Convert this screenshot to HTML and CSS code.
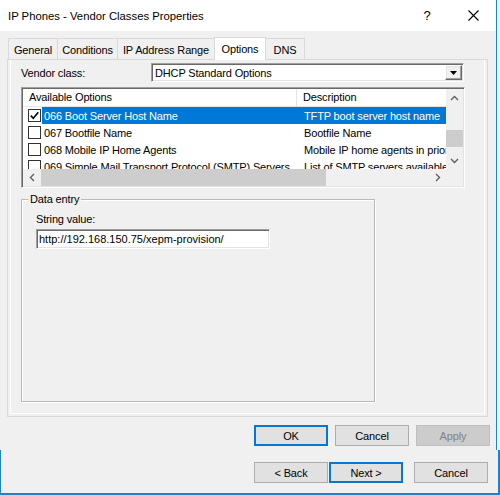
FILE: index.html
```html
<!DOCTYPE html>
<html>
<head>
<meta charset="utf-8">
<link rel="stylesheet" href="styles.css">
</head>
<body>
<div class="dialog">
  <div class="titlebar">
    <span class="title">IP Phones - Vendor Classes Properties</span>
    <span class="help">?</span>
    <span class="close"><svg width="11" height="11" viewBox="0 0 11 11"><path d="M0.5 0.5 L10.5 10.5 M10.5 0.5 L0.5 10.5" stroke="#000" stroke-width="1.1" fill="none"/></svg></span>
  </div>
  <div class="content">
    <div class="tabs">
      <div class="tab tab-general">General</div>
      <div class="tab tab-conditions">Conditions</div>
      <div class="tab tab-range">IP Address Range</div>
      <div class="tab tab-options active">Options</div>
      <div class="tab tab-dns">DNS</div>
    </div>
    <div class="panel">
      <div class="page">
        <div class="vendor-row">
          <span class="vendor-label">Vendor class:</span>
          <div class="combo">
            <span class="combo-text">DHCP Standard Options</span>
            <span class="combo-btn"><svg width="7" height="4" viewBox="0 0 7 4"><polygon points="0,0 7,0 3.5,4" fill="#000"/></svg></span>
          </div>
        </div>
        <div class="listview">
          <div class="lv-content">
            <div class="lv-header">
              <div class="col-h1">Available Options</div>
              <div class="col-h2">Description</div>
            </div>
            <div class="lv-row">
              <span class="check"><svg width="11" height="11" viewBox="0 0 11 11"><path d="M1.8 5.6 L4.3 8.2 L9.3 2.3" stroke="#000" stroke-width="1.6" fill="none"/></svg></span>
              <div class="item selected"><span class="name">066 Boot Server Host Name</span><span class="desc">TFTP boot server host name</span></div>
            </div>
            <div class="lv-row">
              <span class="check"></span>
              <div class="item"><span class="name">067 Bootfile Name</span><span class="desc">Bootfile Name</span></div>
            </div>
            <div class="lv-row">
              <span class="check"></span>
              <div class="item"><span class="name">068 Mobile IP Home Agents</span><span class="desc">Mobile IP home agents in priority order</span></div>
            </div>
            <div class="lv-row">
              <span class="check"></span>
              <div class="item"><span class="name">069 Simple Mail Transport Protocol (SMTP) Servers</span><span class="desc">List of SMTP servers available to the client</span></div>
            </div>
          </div>
          <div class="vscroll">
            <span class="sb-btn"><svg width="9" height="6" viewBox="0 0 9 6"><path d="M1 5 L4.5 1.5 L8 5" stroke="#606060" stroke-width="1.4" fill="none"/></svg></span>
            <div class="vtrack"><div class="vthumb"></div></div>
            <span class="sb-btn"><svg width="9" height="6" viewBox="0 0 9 6"><path d="M1 1 L4.5 4.5 L8 1" stroke="#606060" stroke-width="1.4" fill="none"/></svg></span>
          </div>
          <div class="hscroll">
            <span class="sb-btn"><svg width="6" height="9" viewBox="0 0 6 9"><path d="M5 1 L1.5 4.5 L5 8" stroke="#606060" stroke-width="1.4" fill="none"/></svg></span>
            <div class="htrack"><div class="hthumb"></div></div>
            <span class="sb-btn"><svg width="6" height="9" viewBox="0 0 6 9"><path d="M1 1 L4.5 4.5 L1 8" stroke="#606060" stroke-width="1.4" fill="none"/></svg></span>
          </div>
          <div class="corner"></div>
        </div>
        <div class="group">
          <span class="legend">Data entry</span>
          <span class="field-label">String value:</span>
          <div class="textbox">http://192.168.150.75/xepm-provision/</div>
        </div>
      </div>
    </div>
    <div class="btn-row">
      <div class="btn default">OK</div>
      <div class="btn">Cancel</div>
      <div class="btn disabled">Apply</div>
    </div>
  </div>
</div>
<div class="wizard">
  <div class="btn">&lt; Back</div>
  <div class="btn default next">Next &gt;</div>
  <div class="btn cancel2">Cancel</div>
</div>
</body>
</html>
```
FILE: styles.css
```css
* { box-sizing: border-box; }
html, body { margin: 0; padding: 0; }
body {
  width: 500px;
  height: 495px;
  overflow: hidden;
  background: #f0f0f0;
  font-family: "Liberation Sans", Arial, sans-serif;
  font-size: 11px;
  letter-spacing: -0.15px;
  color: #000;
}

.dialog {
  width: 497px;
  height: 450px;
  border-right: 1px solid #1883d7;
  display: flex;
  flex-direction: column;
}

.titlebar {
  height: 31px;
  flex: none;
  background: #fff;
  display: flex;
  align-items: center;
  padding-left: 8px;
}
.title { flex: 1; font-size: 11.3px; letter-spacing: 0; }
.help { width: 46px; text-align: center; font-size: 13px; }
.close { width: 46px; display: flex; justify-content: center; align-items: center; }

.content {
  flex: 1;
  padding: 6px 6px 0 7px;
  display: flex;
  flex-direction: column;
}

.tabs {
  display: flex;
  align-items: flex-end;
  height: 22px;
  margin-left: 1px;
}
.tab {
  height: 21px;
  border: 1px solid #d9d9d9;
  border-bottom: none;
  margin-left: -1px;
  padding-top: 2px;
  background: #f0f0f0;
  display: flex;
  align-items: center;
  justify-content: center;
  white-space: nowrap;
}
.tab:first-child { margin-left: 0; }
.tab.active {
  height: 23px;
  margin-bottom: -1px;
  padding-top: 0;
  background: #fff;
  position: relative;
  z-index: 1;
}
.tab-general { width: 50px; }
.tab-conditions { width: 61px; }
.tab-range { width: 98px; }
.tab-options { width: 52px; }
.tab-dns { width: 40px; }

.panel {
  width: 481px;
  height: 358px;
  border: 1px solid #d9d9d9;
  padding: 0 2px 2px 2px;
  display: flex;
}
.page {
  flex: 1;
  border: 1px solid #fff;
  border-top: none;
  padding: 3px 0 0 10px;
  display: flex;
  flex-direction: column;
  align-items: flex-start;
}

.vendor-row { display: flex; align-items: center; height: 19px; }
.vendor-label { width: 130px; }
.combo {
  width: 313px;
  height: 19px;
  background: #fff;
  border: 1px solid;
  border-color: #a0a0a0 #fff #fff #a0a0a0;
  box-shadow: inset 1px 1px #696969, inset -1px -1px #e3e3e3;
  padding: 1px;
  display: flex;
  align-items: center;
}
.combo-text { flex: 1; padding-left: 2px; }
.combo-btn {
  width: 17px;
  height: 15px;
  background: #f0f0f0;
  border: 1px solid;
  border-color: #fff #696969 #696969 #fff;
  box-shadow: inset -1px -1px #a0a0a0, inset 1px 1px #e3e3e3;
  display: flex;
  align-items: center;
  justify-content: center;
}

.listview {
  margin-top: 5px;
  width: 444px;
  height: 101px;
  border: 1px solid;
  border-color: #a0a0a0 #fff #fff #a0a0a0;
  box-shadow: inset 1px 1px #696969, inset -1px -1px #e3e3e3;
  padding: 1px;
  display: grid;
  grid-template-columns: 1fr 17px;
  grid-template-rows: 1fr 17px;
  background: #fff;
}
.lv-content { overflow: hidden; background: #fff; }
.lv-header {
  display: flex;
  height: 18px;
  border-bottom: 1px solid #e5e5e5;
}
.col-h1 {
  width: 274px;
  border-right: 1px solid #e5e5e5;
  padding-left: 6px;
  line-height: 17px;
}
.col-h2 { padding-left: 6px; line-height: 17px; }

.lv-row { display: flex; align-items: center; height: 17px; }
.check {
  width: 13px;
  height: 13px;
  margin-left: 5px;
  flex: none;
  border: 1px solid #333;
  background: #fff;
  display: flex;
}
.item {
  flex: 1;
  margin-left: 1px;
  height: 17px;
  display: flex;
  align-items: center;
  overflow: hidden;
}
.item.selected { background: #0078d7; color: #fff; }
.name { width: 255px; flex: none; padding-left: 2px; overflow: hidden; white-space: nowrap; }
.desc { flex: 1; padding-left: 7px; overflow: hidden; white-space: nowrap; }

.vscroll { background: #f0f0f0; display: flex; flex-direction: column; }
.hscroll { background: #f0f0f0; display: flex; }
.sb-btn {
  width: 17px;
  height: 17px;
  flex: none;
  display: flex;
  align-items: center;
  justify-content: center;
}
.vtrack { flex: 1; }
.vthumb { margin-top: 24px; height: 17px; background: #cdcdcd; }
.htrack { flex: 1; display: flex; align-items: stretch; }
.hthumb { margin-left: 1px; width: 285px; background: #cdcdcd; }
.corner { background: #f0f0f0; }

.group {
  margin-top: 11px;
  width: 354px;
  height: 203px;
  border: 1px solid #b9b9b9;
  box-shadow: 1px 1px 0 #fff, inset 1px 1px 0 #fff;
  padding-left: 14px;
  display: flex;
  flex-direction: column;
  align-items: flex-start;
}
.legend {
  margin: -7px 0 0 -8px;
  padding: 0 2px;
  line-height: 13px;
  background: #f0f0f0;
}
.field-label { margin-top: 7px; line-height: 13px; }
.textbox {
  margin-top: 3px;
  width: 234px;
  height: 20px;
  background: #fff;
  border: 1px solid;
  border-color: #a0a0a0 #fff #fff #a0a0a0;
  box-shadow: inset 1px 1px #696969, inset -1px -1px #e3e3e3;
  padding-left: 2px;
  line-height: 18px;
  letter-spacing: 0;
  white-space: nowrap;
  overflow: hidden;
}

.btn-row {
  display: flex;
  justify-content: flex-end;
  gap: 7px;
  margin-top: 8px;
}
.btn {
  width: 74px;
  height: 21px;
  flex: none;
  background: #e1e1e1;
  border: 1px solid #adadad;
  display: flex;
  align-items: center;
  justify-content: center;
}
.btn.default { border: 2px solid #0078d7; }
.btn.disabled { background: #cccccc; border-color: #bfbfbf; color: #838383; }

.wizard {
  width: 500px;
  height: 45px;
  border-left: 1px solid #1883d7;
  border-right: 2px solid #1883d7;
  border-bottom: 2px solid #1883d7;
  display: flex;
  justify-content: flex-end;
  align-items: flex-start;
  padding: 12px 10px 0 0;
}
.wizard .next { margin-left: 1px; }
.wizard .cancel2 { margin-left: 11px; }
```
